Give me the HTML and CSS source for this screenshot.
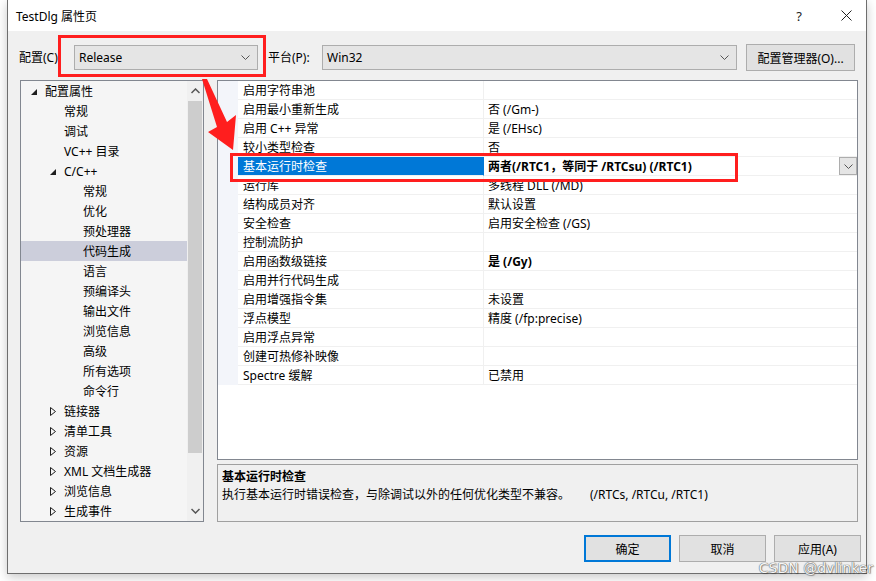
FILE: index.html
```html
<!DOCTYPE html>
<html lang="zh-CN">
<head>
    <meta charset="UTF-8">
    <title>TestDlg 属性页</title>
    <link rel="stylesheet" href="styles.css">
</head>
<body>
    <div class="window">
        <div class="titlebar">
            <span class="title">TestDlg 属性页</span>
            <span class="help">?</span>
            <span class="close">
                <svg width="11" height="11" viewBox="0 0 11 11"><path d="M0.5 0.5 L10.5 10.5 M10.5 0.5 L0.5 10.5" stroke="#222" stroke-width="1" fill="none"/></svg>
            </span>
        </div>

        <div class="toolbar">
            <span class="lbl lbl-config">配置(C):</span>
            <div class="combo combo-config">
                <span>Release</span>
                <svg class="chev" width="9" height="5" viewBox="0 0 9 5"><path d="M0.5 0.5 L4.5 4.5 L8.5 0.5" stroke="#555" fill="none"/></svg>
            </div>
            <span class="lbl lbl-platform">平台(P):</span>
            <div class="combo combo-platform">
                <span>Win32</span>
                <svg class="chev" width="9" height="5" viewBox="0 0 9 5"><path d="M0.5 0.5 L4.5 4.5 L8.5 0.5" stroke="#555" fill="none"/></svg>
            </div>
            <div class="btn btn-manager">配置管理器(O)...</div>
        </div>

        <div class="main">
            <div class="tree">
                <ul class="tree-list">
                    <li class="node lv0"><span class="tog"><svg width="6" height="6" viewBox="0 0 6 6"><polygon points="6,0 6,6 0,6" fill="#1e1e1e"/></svg></span>配置属性</li>
                    <li class="node lv1"><span class="tog"></span>常规</li>
                    <li class="node lv1"><span class="tog"></span>调试</li>
                    <li class="node lv1"><span class="tog"></span>VC++ 目录</li>
                    <li class="node lv1"><span class="tog"><svg width="6" height="6" viewBox="0 0 6 6"><polygon points="6,0 6,6 0,6" fill="#1e1e1e"/></svg></span>C/C++</li>
                    <li class="node lv2"><span class="tog"></span>常规</li>
                    <li class="node lv2"><span class="tog"></span>优化</li>
                    <li class="node lv2"><span class="tog"></span>预处理器</li>
                    <li class="node lv2 selected"><span class="tog"></span>代码生成</li>
                    <li class="node lv2"><span class="tog"></span>语言</li>
                    <li class="node lv2"><span class="tog"></span>预编译头</li>
                    <li class="node lv2"><span class="tog"></span>输出文件</li>
                    <li class="node lv2"><span class="tog"></span>浏览信息</li>
                    <li class="node lv2"><span class="tog"></span>高级</li>
                    <li class="node lv2"><span class="tog"></span>所有选项</li>
                    <li class="node lv2"><span class="tog"></span>命令行</li>
                    <li class="node lv1"><span class="tog"><svg width="6" height="9" viewBox="0 0 6 9"><polygon points="0.5,0.5 5.5,4.5 0.5,8.5" fill="none" stroke="#1e1e1e"/></svg></span>链接器</li>
                    <li class="node lv1"><span class="tog"><svg width="6" height="9" viewBox="0 0 6 9"><polygon points="0.5,0.5 5.5,4.5 0.5,8.5" fill="none" stroke="#1e1e1e"/></svg></span>清单工具</li>
                    <li class="node lv1"><span class="tog"><svg width="6" height="9" viewBox="0 0 6 9"><polygon points="0.5,0.5 5.5,4.5 0.5,8.5" fill="none" stroke="#1e1e1e"/></svg></span>资源</li>
                    <li class="node lv1"><span class="tog"><svg width="6" height="9" viewBox="0 0 6 9"><polygon points="0.5,0.5 5.5,4.5 0.5,8.5" fill="none" stroke="#1e1e1e"/></svg></span>XML 文档生成器</li>
                    <li class="node lv1"><span class="tog"><svg width="6" height="9" viewBox="0 0 6 9"><polygon points="0.5,0.5 5.5,4.5 0.5,8.5" fill="none" stroke="#1e1e1e"/></svg></span>浏览信息</li>
                    <li class="node lv1"><span class="tog"><svg width="6" height="9" viewBox="0 0 6 9"><polygon points="0.5,0.5 5.5,4.5 0.5,8.5" fill="none" stroke="#1e1e1e"/></svg></span>生成事件</li>
                </ul>
                <div class="scrollbar">
                    <div class="sb-arrow"><svg width="9" height="6" viewBox="0 0 9 6"><path d="M0.5 5 L4.5 1 L8.5 5" stroke="#555" stroke-width="1.5" fill="none"/></svg></div>
                    <div class="sb-thumb"></div>
                    <div class="sb-track"></div>
                    <div class="sb-arrow"><svg width="9" height="6" viewBox="0 0 9 6"><path d="M0.5 1 L4.5 5 L8.5 1" stroke="#555" stroke-width="1.5" fill="none"/></svg></div>
                </div>
            </div>

            <div class="right">
                <div class="grid">
                    <div class="row"><span class="gut"></span><span class="name">启用字符串池</span><span class="val"></span></div>
                    <div class="row"><span class="gut"></span><span class="name">启用最小重新生成</span><span class="val">否 (/Gm-)</span></div>
                    <div class="row"><span class="gut"></span><span class="name">启用 C++ 异常</span><span class="val">是 (/EHsc)</span></div>
                    <div class="row"><span class="gut"></span><span class="name">较小类型检查</span><span class="val">否</span></div>
                    <div class="row active"><span class="gut"></span><span class="name">基本运行时检查</span><span class="val bold">两者(/RTC1，等同于 /RTCsu) (/RTC1)<span class="drop"><svg width="9" height="5" viewBox="0 0 9 5"><path d="M0.5 0.5 L4.5 4.5 L8.5 0.5" stroke="#555" fill="none"/></svg></span></span></div>
                    <div class="row"><span class="gut"></span><span class="name">运行库</span><span class="val">多线程 DLL (/MD)</span></div>
                    <div class="row"><span class="gut"></span><span class="name">结构成员对齐</span><span class="val">默认设置</span></div>
                    <div class="row"><span class="gut"></span><span class="name">安全检查</span><span class="val">启用安全检查 (/GS)</span></div>
                    <div class="row"><span class="gut"></span><span class="name">控制流防护</span><span class="val"></span></div>
                    <div class="row"><span class="gut"></span><span class="name">启用函数级链接</span><span class="val bold">是 (/Gy)</span></div>
                    <div class="row"><span class="gut"></span><span class="name">启用并行代码生成</span><span class="val"></span></div>
                    <div class="row"><span class="gut"></span><span class="name">启用增强指令集</span><span class="val">未设置</span></div>
                    <div class="row"><span class="gut"></span><span class="name">浮点模型</span><span class="val">精度 (/fp:precise)</span></div>
                    <div class="row"><span class="gut"></span><span class="name">启用浮点异常</span><span class="val"></span></div>
                    <div class="row"><span class="gut"></span><span class="name">创建可热修补映像</span><span class="val"></span></div>
                    <div class="row"><span class="gut"></span><span class="name">Spectre 缓解</span><span class="val">已禁用</span></div>
                </div>
                <div class="desc">
                    <div class="desc-title">基本运行时检查</div>
                    <div class="desc-text">执行基本运行时错误检查，与除调试以外的任何优化类型不兼容。<span class="desc-flags">(/RTCs, /RTCu, /RTC1)</span></div>
                </div>
            </div>
        </div>

        <div class="footer">
            <div class="btn btn-default">确定</div>
            <div class="btn">取消</div>
            <div class="btn">应用(A)</div>
        </div>
    </div>

    <!-- annotation marks drawn over the screenshot -->
    <svg class="marks" width="876" height="581" viewBox="0 0 876 581">
        <rect x="59.5" y="36.5" width="205" height="39" fill="none" stroke="#ff1e1e" stroke-width="3"/>
        <rect x="231.5" y="154.5" width="505" height="26" fill="none" stroke="#ff1e1e" stroke-width="3"/>
        <polygon points="202,79 207,79 227,122 236,115 233,150 208,132 217,127" fill="#ff1e1e"/>
    </svg>

    <div class="watermark">CSDN @dvlinker</div>
</body>
</html>
```

FILE: styles.css
```css
* {
    margin: 0;
    padding: 0;
    box-sizing: border-box;
}

body {
    background: #fff;
    font-family: "Noto Sans", "Noto Sans CJK SC", sans-serif;
    font-size: 12px;
    color: #000;
    width: 876px;
    height: 581px;
    overflow: hidden;
    position: relative;
}

.window {
    margin-left: 7px;
    width: 860px;
    height: 574px;
    background: #f0f0f0;
    border: 1px solid #6e6e6e;
    border-top: none;
    box-shadow: 0 3px 10px rgba(0, 0, 0, 0.22);
}

/* title bar */
.titlebar {
    height: 31px;
    background: #fff;
    display: flex;
    align-items: center;
    padding-left: 8px;
}

.title {
    flex: 1;
    font-size: 12px;
}

.help {
    width: 40px;
    margin-right: 7px;
    text-align: center;
    font-size: 13px;
    color: #222;
}

.close {
    width: 40px;
    display: flex;
    justify-content: center;
}

/* toolbar */
.toolbar {
    display: flex;
    align-items: center;
    height: 40px;
    padding: 13px 0 0 11px;
}

.lbl {
    line-height: 27px;
}

.lbl-config {
    width: 55px;
}

.lbl-platform {
    width: 54px;
    margin-left: 10px;
}

.combo {
    height: 25px;
    background: #e5e5e5;
    border: 1px solid #adadad;
    display: flex;
    align-items: center;
    justify-content: space-between;
    padding: 0 7px 0 4px;
}

.combo-config {
    width: 184px;
}

.combo-platform {
    width: 415px;
}

.btn {
    height: 27px;
    background: #e1e1e1;
    border: 1px solid #adadad;
    display: flex;
    align-items: center;
    justify-content: center;
}

.btn-manager {
    width: 109px;
    margin-left: 9px;
}

/* main area */
.main {
    display: flex;
    gap: 13px;
    padding: 9px 0 0 12px;
}

.tree {
    width: 184px;
    height: 442px;
    border: 1px solid #828790;
    background: #f5f5f5;
    display: flex;
    overflow: hidden;
}

.tree-list {
    list-style: none;
    flex: 1;
}

.node {
    height: 20px;
    line-height: 20px;
    padding-top: 1px;
    display: flex;
    align-items: center;
    white-space: nowrap;
}

.lv0 { padding-left: 5px; }
.lv1 { padding-left: 24px; }
.lv2 { padding-left: 43px; }

.node.selected {
    background: #cccedb;
}

.tog {
    width: 19px;
    height: 19px;
    padding-left: 5px;
    display: flex;
    align-items: center;
}

.scrollbar {
    width: 16px;
    display: flex;
    flex-direction: column;
    background: #f0f0f0;
}

.sb-arrow {
    height: 20px;
    display: flex;
    align-items: center;
    justify-content: center;
}

.sb-thumb {
    height: 352px;
    margin: 0 1px;
    background: #cdcdcd;
}

.sb-track {
    flex: 1;
}

.right {
    width: 641px;
    display: flex;
    flex-direction: column;
    gap: 4px;
}

.grid {
    height: 380px;
    border: 1px solid #828790;
    background: #fff;
}

.row {
    display: flex;
    height: 19px;
}

.gut {
    width: 20px;
    background: #f3f5fa;
}

.name {
    width: 246px;
    padding: 2px 0 0 5px;
    line-height: 16px;
    border-bottom: 1px solid #f0f0f0;
    border-right: 1px solid #f0f0f0;
    white-space: nowrap;
}

.val {
    flex: 1;
    padding: 2px 0 0 4px;
    line-height: 16px;
    border-bottom: 1px solid #f0f0f0;
    white-space: nowrap;
    display: flex;
}

.bold {
    font-weight: bold;
}

.row.active .name {
    background: #0078d7;
    color: #fff;
    border-right-color: #0078d7;
}

.drop {
    margin: -2px 0 0 auto;
    width: 18px;
    height: 18px;
    background: #e5e5e5;
    border: 1px solid #adadad;
    display: flex;
    align-items: center;
    justify-content: center;
}

.desc {
    height: 58px;
    border: 1px solid #a0a0a0;
    padding: 3px 4px;
    line-height: 18px;
}

.desc-title {
    font-weight: bold;
}

.desc-flags {
    margin-left: 20px;
}

/* buttons */
.footer {
    display: flex;
    justify-content: flex-end;
    gap: 8px;
    padding: 13px 5px 0 0;
}

.footer .btn {
    width: 87px;
}

.btn-default {
    border: 2px solid #0078d7;
}

.marks {
    position: absolute;
    left: 0;
    top: 0;
    pointer-events: none;
}

.watermark {
    position: absolute;
    right: 3px;
    bottom: 5px;
    font-family: "DejaVu Sans", sans-serif;
    font-size: 14px;
    color: #f6f6f6;
    text-shadow: 0 0 1px #5a5a5a, 0 0 1px #5a5a5a, 1px 1px 1px rgba(0, 0, 0, 0.3);
}
```
